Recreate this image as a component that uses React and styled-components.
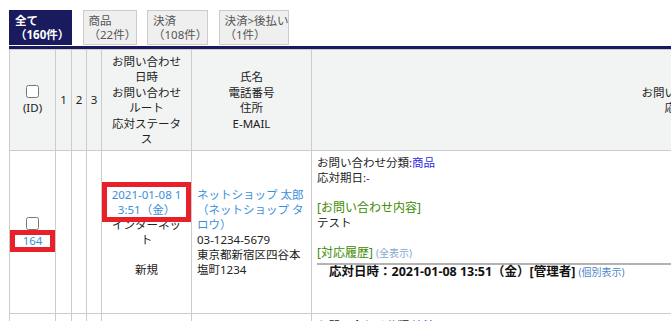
import React from "react"
import styled, { createGlobalStyle } from "styled-components"

const NAVY = "#1a1a5e"
const RED = "#e8202a"

const GlobalStyle = createGlobalStyle`
  html, body {
    margin: 0;
    padding: 0;
    overflow: hidden;
    background: #fff;
  }
  body {
    font-family: "Noto Sans", "Noto Sans CJK JP", sans-serif;
    color: #222;
  }
`

const Page = styled.div`
  width: 1055px;
  padding: 10px 0 0 9px;
`

const TabBar = styled.div`
  display: flex;
  gap: 10.5px;
  padding-bottom: 1px;
  border-bottom: 3px solid ${NAVY};
`

const Tab = styled.div`
  box-sizing: border-box;
  width: ${(p) => p.$w}px;
  height: 35px;
  padding: 3px 3px 0 5px;
  font-size: 11.5px;
  line-height: 14px;
  white-space: nowrap;
  background: ${(p) => (p.$active ? NAVY : "#efefef")};
  color: ${(p) => (p.$active ? "#fff" : "#555")};
  font-weight: ${(p) => (p.$active ? 700 : 400)};
  border: 1px solid ${(p) => (p.$active ? NAVY : "#ccc")};
`

const Table = styled.table`
  border-collapse: collapse;
  table-layout: fixed;
  width: 1055px;
  font-size: 11.5px;
  word-break: break-all;
`

const HeadRow = styled.tr`
  height: 101px;
`

const BodyRow = styled.tr`
  height: ${(p) => p.$h}px;
`

const Th = styled.th`
  background: #f2f4f3;
  border: 1px solid #ccc;
  font-weight: 400;
  line-height: 15.5px;
  padding: 3px ${(p) => (p.$narrow ? 0 : 5)}px;
  text-align: center;
  vertical-align: middle;
  color: #222;
`

const Td = styled.td`
  border: 1px solid #ccc;
  line-height: 15px;
  padding: ${(p) => (p.$top ? "4px 5px" : `3px ${p.$narrow ? 0 : 5}px`)};
  text-align: ${(p) => p.$align || "center"};
  vertical-align: ${(p) => (p.$top ? "top" : "middle")};
`

const Check = styled.input.attrs({ type: "checkbox" })`
  display: block;
  width: 13px;
  height: 13px;
  margin: 0 auto ${(p) => p.$gap || 0}px;
`

const IdLink = styled.div`
  display: block;
  line-height: 12px;
  color: #3b8fd9;
  outline: 5px solid ${RED};
`

const DateLink = styled.div`
  color: #3b8fd9;
  outline: 5px solid ${RED};
`

const NameLink = styled.span`
  color: #3b8fd9;
`

const Spacer = styled.div`
  height: 15px;
`

const Blue = styled.span`
  color: #2a2ae8;
`

const Green = styled.span`
  color: #3d8b00;
  font-size: 12px;
`

const Small = styled.span`
  font-size: 10px;
  font-weight: 400;
  color: ${(p) => (p.$strong ? "#4f86c6" : "#86a6cf")};
`

const History = styled.div`
  margin-top: 2px;
  border-top: 2px solid #b3b3b3;
  padding-left: 12px;
  font-size: 12.5px;
  font-weight: 700;
  line-height: 14px;
  color: #111;
`

const tabs = [
  { label: "全て", count: "（160件）", w: 63, active: true },
  { label: "商品", count: "（22件）", w: 54 },
  { label: "決済", count: "（108件）", w: 61 },
  { label: "決済>後払い", count: "（1件）", w: 70 },
]

const App = () => {
  return (
    <Page>
      <GlobalStyle />
      <TabBar>
        {tabs.map((t) => (
          <Tab key={t.label} $w={t.w} $active={t.active}>
            {t.label}
            <br />
            {t.count}
          </Tab>
        ))}
      </TabBar>
      <Table>
        <colgroup>
          <col style={{ width: 46 }} />
          <col style={{ width: 16 }} />
          <col style={{ width: 15 }} />
          <col style={{ width: 15 }} />
          <col style={{ width: 90 }} />
          <col style={{ width: 120 }} />
          <col />
        </colgroup>
        <thead>
          <HeadRow>
            <Th>
              <Check $gap={2} />
              (ID)
            </Th>
            <Th $narrow>1</Th>
            <Th $narrow>2</Th>
            <Th $narrow>3</Th>
            <Th>
              お問い合わせ<br />日時<br />お問い合わせ<br />ルート<br />応対ステータス
            </Th>
            <Th>
              氏名<br />電話番号<br />住所<br />E-MAIL
            </Th>
            <Th>
              お問い合わせ内容<br />応対履歴
            </Th>
          </HeadRow>
        </thead>
        <tbody>
          <BodyRow $h={163}>
            <Td>
              <Check $gap={5} />
              <IdLink>164</IdLink>
            </Td>
            <Td $narrow />
            <Td $narrow />
            <Td $narrow />
            <Td>
              <DateLink>2021-01-08 13:51（金）</DateLink>
              インターネット
              <Spacer />
              新規
            </Td>
            <Td $align="left">
              <NameLink>ネットショップ 太郎（ネットショップ タロウ）</NameLink>
              <br />
              03-1234-5679
              <br />
              東京都新宿区四谷本塩町1234
            </Td>
            <Td $align="left" $top>
              お問い合わせ分類:<Blue>商品</Blue>
              <br />
              応対期日:<Blue>-</Blue>
              <Spacer />
              <Green>[お問い合わせ内容]</Green>
              <br />
              テスト
              <Spacer />
              <Green>[対応履歴]</Green> <Small>(全表示)</Small>
              <History>
                応対日時：2021-01-08 13:51（金）[管理者] <Small $strong>(個別表示)</Small>
              </History>
            </Td>
          </BodyRow>
          <BodyRow $h={163}>
            <Td />
            <Td $narrow />
            <Td $narrow />
            <Td $narrow />
            <Td />
            <Td />
            <Td $align="left" $top>
              お問い合わせ分類:<Blue>決済</Blue>
            </Td>
          </BodyRow>
        </tbody>
      </Table>
    </Page>
  )
}

export default App
